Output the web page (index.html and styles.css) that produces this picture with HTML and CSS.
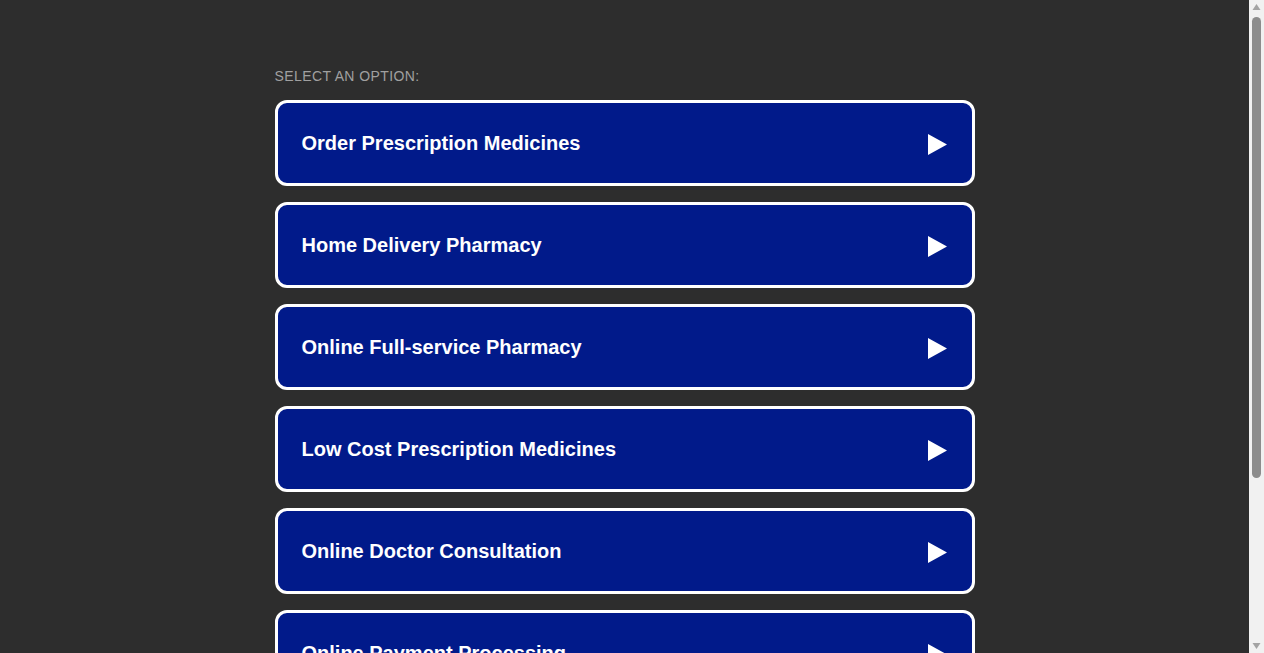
FILE: index.html
```html
<!DOCTYPE html>
<html>
<head>
<meta charset="utf-8">
<link rel="stylesheet" href="styles.css">
</head>
<body>
<div class="wrap">
  <div class="label">Select an option:</div>
  <ul class="options">
    <li><a class="option" href="#"><span>Order Prescription Medicines</span><svg class="arrow" width="19" height="21" viewBox="0 0 19 21"><polygon points="0,0 19,10.5 0,21" fill="#fff"/></svg></a></li>
    <li><a class="option" href="#"><span>Home Delivery Pharmacy</span><svg class="arrow" width="19" height="21" viewBox="0 0 19 21"><polygon points="0,0 19,10.5 0,21" fill="#fff"/></svg></a></li>
    <li><a class="option" href="#"><span>Online Full-service Pharmacy</span><svg class="arrow" width="19" height="21" viewBox="0 0 19 21"><polygon points="0,0 19,10.5 0,21" fill="#fff"/></svg></a></li>
    <li><a class="option" href="#"><span>Low Cost Prescription Medicines</span><svg class="arrow" width="19" height="21" viewBox="0 0 19 21"><polygon points="0,0 19,10.5 0,21" fill="#fff"/></svg></a></li>
    <li><a class="option" href="#"><span>Online Doctor Consultation</span><svg class="arrow" width="19" height="21" viewBox="0 0 19 21"><polygon points="0,0 19,10.5 0,21" fill="#fff"/></svg></a></li>
    <li><a class="option" href="#"><span>Online Payment Processing</span><svg class="arrow" width="19" height="21" viewBox="0 0 19 21"><polygon points="0,0 19,10.5 0,21" fill="#fff"/></svg></a></li>
  </ul>
</div>
<div class="scrollbar">
  <svg class="sb-up" width="15" height="15" viewBox="0 0 15 15"><polygon points="3.5,10 7.5,4 11.5,10" fill="#a3a3a3"/></svg>
  <div class="sb-track"><div class="sb-thumb"></div></div>
  <svg class="sb-down" width="15" height="15" viewBox="0 0 15 15"><polygon points="3.5,5 11.5,5 7.5,11" fill="#a3a3a3"/></svg>
</div>
</body>
</html>
```
FILE: styles.css
```css
html, body {
  margin: 0;
  padding: 0;
  background: #2d2d2d;
}
body {
  font-family: "Liberation Sans", Arial, sans-serif;
  margin-right: 15px;
}
.wrap {
  width: 700px;
  margin: 0 auto;
  padding: 68px 0 170px;
}
.label {
  text-transform: uppercase;
  color: #a0a0a0;
  font-size: 14px;
  line-height: 16px;
  letter-spacing: 0.4px;
  margin-bottom: 16px;
}
.options {
  list-style: none;
  margin: 0;
  padding: 0;
  display: flex;
  flex-direction: column;
  gap: 16px;
}
.option {
  display: flex;
  align-items: center;
  justify-content: space-between;
  height: 80px;
  padding: 0 25px 0 24px;
  border: 3px solid #ffffff;
  border-radius: 12px;
  background: #011a8a;
  color: #ffffff;
  font-weight: bold;
  font-size: 20px;
  text-decoration: none;
}
.arrow {
  display: block;
  margin-top: 2px;
}
.scrollbar {
  position: fixed;
  top: 0;
  right: 0;
  width: 15px;
  height: 100vh;
  background: #f1f1f1;
  display: flex;
  flex-direction: column;
}
.sb-up, .sb-down {
  display: block;
  flex: none;
}
.sb-track {
  flex: 1;
  padding: 2px 3px 0;
}
.sb-thumb {
  height: 461px;
  background: #8c8c8c;
  border-radius: 5px;
}
```
